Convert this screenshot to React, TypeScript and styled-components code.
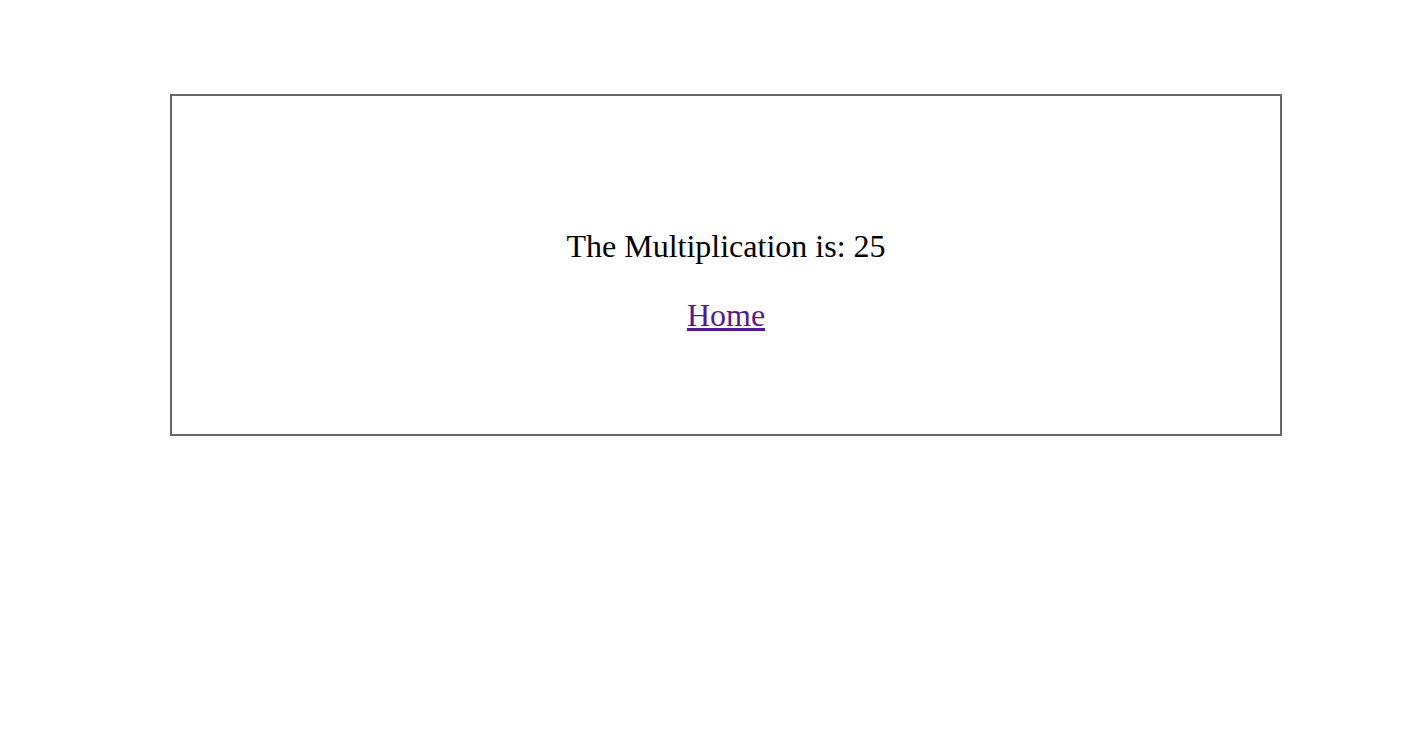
import React from "react";
import styled, { createGlobalStyle } from "styled-components";

const GlobalStyle = createGlobalStyle`
  html, body {
    margin: 0;
    padding: 0;
    background: #ffffff;
  }
  body {
    font-family: "Liberation Serif", "Times New Roman", serif;
  }
`;

const Page = styled.div`
  padding: 94px 130px 0 170px;
`;

const ResultCard = styled.div`
  border: 2px solid #666666;
  padding: 132px 20px 100px;
  display: flex;
  flex-direction: column;
  align-items: center;
  gap: 32px;
`;

const ResultText = styled.p`
  margin: 0;
  font-size: 32px;
  color: #000000;
`;

const HomeLink = styled.a`
  font-size: 32px;
  color: #551a8b;
  text-decoration: underline;
`;

function App() {
  const result = 5 * 5;

  return (
    <>
      <GlobalStyle />
      <Page>
        <ResultCard>
          <ResultText>The Multiplication is: {result}</ResultText>
          <HomeLink href="#">Home</HomeLink>
        </ResultCard>
      </Page>
    </>
  );
}

export default App;
